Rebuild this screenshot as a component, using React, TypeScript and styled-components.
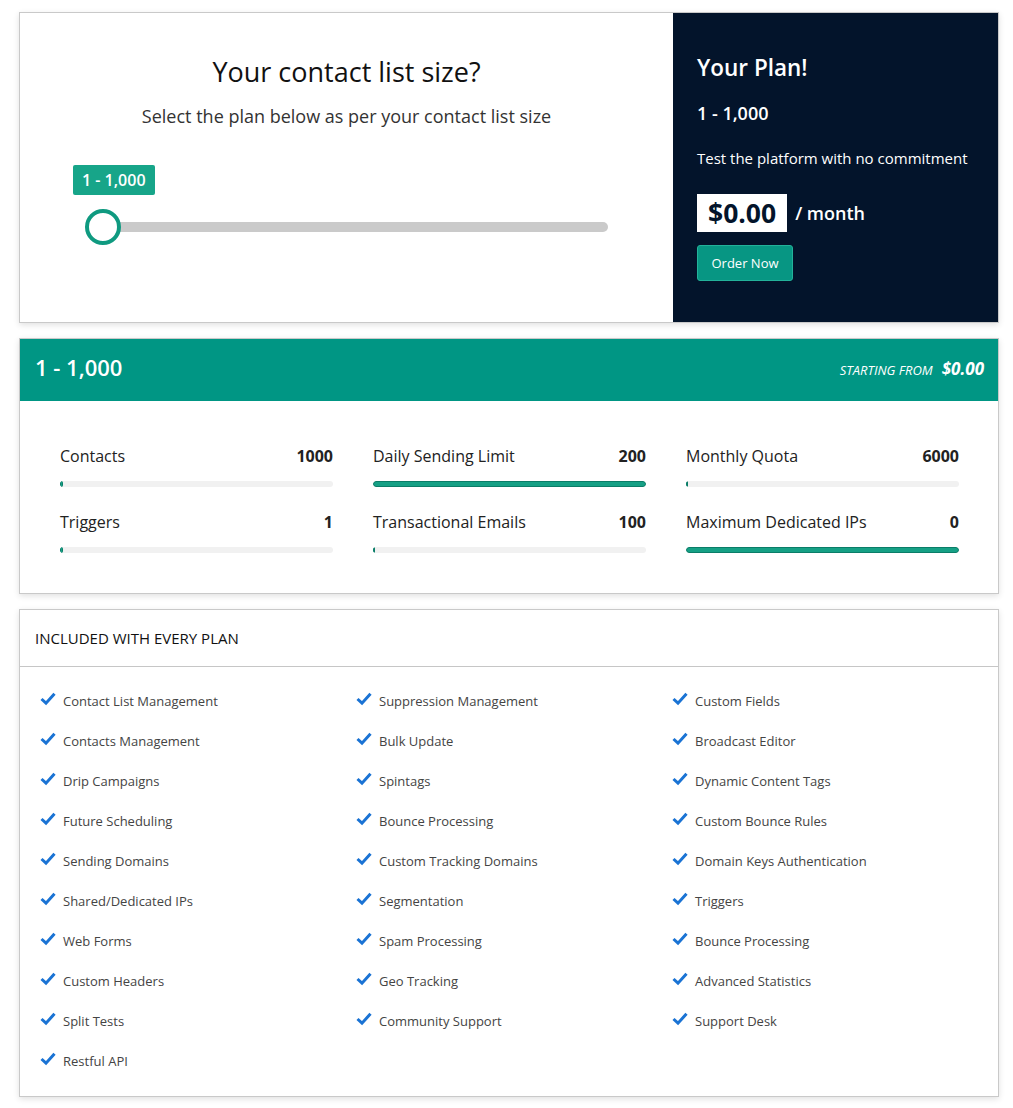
import React from "react";
import styled, { createGlobalStyle } from "styled-components";

const Global = createGlobalStyle`
  html, body { margin: 0; padding: 0; background: #fff; }
  body { font-family: "Open Sans", "Noto Sans", Arial, sans-serif; color: #222; }
  * { box-sizing: border-box; }
`;

const Page = styled.div`
  width: 1013px;
  padding: 12px 15px 10px 19px;
  display: flex;
  flex-direction: column;
  gap: 15px;
`;

const Card = styled.div`
  width: 980px;
  background: #fff;
  border: 1px solid #c9c9c9;
  box-shadow: 0 2px 6px rgba(0, 0, 0, 0.12);
`;

const TopCard = styled(Card)`
  display: flex;
  height: 311px;
`;

const SizePanel = styled.div`
  width: 653px;
  display: flex;
  flex-direction: column;
  align-items: center;
  padding-top: 41px;
`;

const Title = styled.h2`
  margin: 0;
  font-size: 27px;
  font-weight: 500;
  line-height: 36px;
  color: #111;
`;

const Subtitle = styled.p`
  margin: 14px 0 0;
  font-size: 18px;
  font-weight: 400;
  line-height: 24px;
  color: #333;
`;

const SliderArea = styled.div`
  align-self: stretch;
  padding: 37px 65px 0 53px;
  display: flex;
  flex-direction: column;
  align-items: flex-start;
`;

const Badge = styled.div`
  background: #17a589;
  color: #fff;
  font-size: 16px;
  font-weight: 600;
  line-height: 30px;
  height: 30px;
  padding: 0 9px;
  border-radius: 2px;
`;

const Track = styled.div`
  position: relative;
  margin-top: 27px;
  margin-left: 20px;
  width: 515px;
  height: 10px;
  background: #cacaca;
  border-radius: 5px;
`;

const Thumb = styled.div`
  position: absolute;
  left: -8px;
  top: -13px;
  width: 36px;
  height: 36px;
  border-radius: 50%;
  background: #fff;
  border: 4px solid #0f9a80;
`;

const PlanPanel = styled.div`
  flex: 1;
  background: #03142b;
  color: #fff;
  padding: 40px 0 0 24px;
  display: flex;
  flex-direction: column;
  align-items: flex-start;
`;

const PlanTitle = styled.div`
  font-size: 22.5px;
  font-weight: 600;
  line-height: 30px;
`;

const PlanRange = styled.div`
  margin-top: 18px;
  font-size: 18px;
  font-weight: 600;
  line-height: 24px;
`;

const PlanText = styled.div`
  margin-top: 22px;
  font-size: 15px;
  line-height: 22px;
`;

const PriceRow = styled.div`
  margin-top: 25px;
  display: flex;
  align-items: center;
  gap: 8px;
`;

const PriceBox = styled.div`
  background: #fff;
  color: #03142b;
  font-size: 26.5px;
  font-weight: 700;
  line-height: 38px;
  height: 38px;
  padding: 0 11px;
`;

const PerMonth = styled.span`
  font-size: 18px;
  font-weight: 600;
`;

const OrderButton = styled.button`
  margin-top: 13px;
  background: #079683;
  border: 1px solid #23b29a;
  color: #fff;
  font-family: inherit;
  font-size: 13px;
  font-weight: 500;
  width: 96px;
  height: 36px;
  border-radius: 3px;
  cursor: pointer;
`;

const PlanHeader = styled.div`
  height: 62px;
  background: #009684;
  color: #fff;
  display: flex;
  align-items: center;
  justify-content: space-between;
  padding: 0 14px 7px 15px;
`;

const HeaderRange = styled.div`
  font-size: 22px;
  font-weight: 600;
`;

const StartingFrom = styled.div`
  font-style: italic;
  font-size: 13px;
  display: flex;
  align-items: baseline;
  gap: 9px;
  padding-top: 3px;
`;

const StartingPrice = styled.span`
  font-size: 17px;
  font-weight: 700;
`;

const StatsGrid = styled.div`
  display: grid;
  grid-template-columns: repeat(3, 273px);
  column-gap: 40px;
  row-gap: 23px;
  padding: 43px 40px 40px 40px;
`;

const Stat = styled.div`
  display: flex;
  flex-direction: column;
  gap: 13px;
`;

const StatTop = styled.div`
  display: flex;
  justify-content: space-between;
  font-size: 16px;
  line-height: 24px;
  color: #222;
`;

const StatValue = styled.span`
  font-weight: 700;
`;

const Bar = styled.div`
  height: 6px;
  background: #f1f1f1;
  border-radius: 3px;
  overflow: hidden;
`;

const BarFill = styled.div`
  height: 100%;
  background: #16a085;
  border: 1px solid #0b7d68;
  border-radius: 3px;
`;

const FeatureHeader = styled.div`
  height: 57px;
  border-bottom: 1px solid #c6c6c6;
  display: flex;
  align-items: center;
  padding-left: 15px;
  font-size: 15px;
  font-weight: 500;
  color: #111;
`;

const FeatureGrid = styled.div`
  display: grid;
  grid-template-columns: repeat(3, 316px);
  grid-auto-rows: 40px;
  padding: 14px 0 15px 20px;
`;

const Feature = styled.div`
  display: flex;
  align-items: center;
  gap: 7px;
  height: 40px;
  font-size: 13px;
  color: #444;
`;

const Check = () => (
  <svg width="16" height="14" viewBox="0 0 16 14" style={{ marginTop: -4 }}>
    <path d="M1.5 7 L6 11.2 L14.5 1.8" fill="none" stroke="#1a73d4" strokeWidth="3" strokeLinecap="butt" strokeLinejoin="miter" />
  </svg>
);

const stats = [
  { label: "Contacts", value: "1000", pct: 1 },
  { label: "Daily Sending Limit", value: "200", pct: 100 },
  { label: "Monthly Quota", value: "6000", pct: 0.6 },
  { label: "Triggers", value: "1", pct: 1.2 },
  { label: "Transactional Emails", value: "100", pct: 0.6 },
  { label: "Maximum Dedicated IPs", value: "0", pct: 100 },
];

const columns = [
  ["Contact List Management", "Contacts Management", "Drip Campaigns", "Future Scheduling", "Sending Domains", "Shared/Dedicated IPs", "Web Forms", "Custom Headers", "Split Tests", "Restful API"],
  ["Suppression Management", "Bulk Update", "Spintags", "Bounce Processing", "Custom Tracking Domains", "Segmentation", "Spam Processing", "Geo Tracking", "Community Support"],
  ["Custom Fields", "Broadcast Editor", "Dynamic Content Tags", "Custom Bounce Rules", "Domain Keys Authentication", "Triggers", "Bounce Processing", "Advanced Statistics", "Support Desk"],
];

const features: (string | null)[] = [];
for (let r = 0; r < 10; r++) {
  for (let c = 0; c < 3; c++) {
    features.push(columns[c][r] ?? null);
  }
}

export default function App() {
  return (
    <>
      <Global />
      <Page>
        <TopCard>
          <SizePanel>
            <Title>Your contact list size?</Title>
            <Subtitle>Select the plan below as per your contact list size</Subtitle>
            <SliderArea>
              <Badge>1 - 1,000</Badge>
              <Track>
                <Thumb />
              </Track>
            </SliderArea>
          </SizePanel>
          <PlanPanel>
            <PlanTitle>Your Plan!</PlanTitle>
            <PlanRange>1 - 1,000</PlanRange>
            <PlanText>Test the platform with no commitment</PlanText>
            <PriceRow>
              <PriceBox>$0.00</PriceBox>
              <PerMonth>/ month</PerMonth>
            </PriceRow>
            <OrderButton>Order Now</OrderButton>
          </PlanPanel>
        </TopCard>

        <Card>
          <PlanHeader>
            <HeaderRange>1 - 1,000</HeaderRange>
            <StartingFrom>
              STARTING FROM <StartingPrice>$0.00</StartingPrice>
            </StartingFrom>
          </PlanHeader>
          <StatsGrid>
            {stats.map((s) => (
              <Stat key={s.label}>
                <StatTop>
                  <span>{s.label}</span>
                  <StatValue>{s.value}</StatValue>
                </StatTop>
                <Bar>
                  <BarFill style={{ width: `${s.pct}%` }} />
                </Bar>
              </Stat>
            ))}
          </StatsGrid>
        </Card>

        <Card>
          <FeatureHeader>INCLUDED WITH EVERY PLAN</FeatureHeader>
          <FeatureGrid>
            {features.map((f, i) =>
              f ? (
                <Feature key={i}>
                  <Check />
                  <span>{f}</span>
                </Feature>
              ) : (
                <div key={i} />
              )
            )}
          </FeatureGrid>
        </Card>
      </Page>
    </>
  );
}
